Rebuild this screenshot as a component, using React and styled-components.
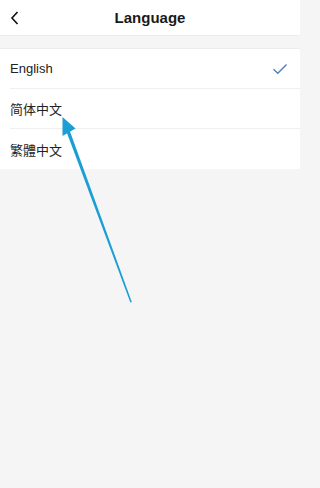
import React from "react";
import styled, { createGlobalStyle } from "styled-components";

const GlobalStyle = createGlobalStyle`
  html, body {
    margin: 0;
    padding: 0;
    background: #f5f5f5;
  }
  body {
    font-family: "Liberation Sans", Arial, "Noto Sans CJK SC", sans-serif;
  }
`;

const Page = styled.div`
  position: relative;
  width: 300px;
  min-height: 488px;
  background: #f5f5f5;
  overflow: hidden;
`;

const Header = styled.div`
  height: 36px;
  display: flex;
  align-items: center;
  justify-content: center;
  position: relative;
  background: #fff;
  border-bottom: 1px solid #ececec;
  box-sizing: border-box;
`;

const BackButton = styled.button`
  position: absolute;
  left: 6px;
  top: 8px;
  width: 18px;
  height: 20px;
  padding: 0;
  border: 0;
  background: none;
  display: flex;
  align-items: center;
  justify-content: center;
`;

const Title = styled.h1`
  margin: 0;
  font-size: 15px;
  font-weight: 700;
  color: #1a1a1a;
`;

const List = styled.ul`
  list-style: none;
  margin: 12px 0 0;
  padding: 0 0 0 10px;
  background: #fff;
  border-top: 1px solid #ececec;
`;

const Row = styled.li`
  height: 40px;
  display: flex;
  align-items: center;
  justify-content: space-between;
  padding-right: 12px;
  font-size: 13px;
  color: #222;
  border-bottom: ${(p) => (p.$last ? "none" : "1px solid #efefef")};
  box-sizing: border-box;
  font-family: "Liberation Sans", Arial, ${(p) => p.$cjk}, sans-serif;
`;

const Arrow = styled.svg`
  position: absolute;
  left: 0;
  top: 0;
  pointer-events: none;
`;

const Check = () => (
  <svg width="16" height="12" viewBox="0 0 16 12">
    <path d="M1.5 6.2 L5.8 10.2 L14.5 1.5" fill="none" stroke="#4d7fb8" strokeWidth="1.4" />
  </svg>
);

const languages = [
  { name: "English", selected: true, cjk: "'Noto Sans CJK SC'" },
  { name: "简体中文", cjk: "'Noto Sans CJK SC'" },
  { name: "繁體中文", cjk: "'Noto Sans CJK TC'" },
];

export default function App() {
  return (
    <Page>
      <GlobalStyle />
      <Header>
        <BackButton aria-label="back">
          <svg width="10" height="14" viewBox="0 0 10 14">
            <path d="M7.5 1 L2 7 L7.5 13" fill="none" stroke="#111" strokeWidth="1.6" />
          </svg>
        </BackButton>
        <Title>Language</Title>
      </Header>
      <List>
        {languages.map((l, i) => (
          <Row key={l.name} $cjk={l.cjk} $last={i === languages.length - 1}>
            <span>{l.name}</span>
            {l.selected && <Check />}
          </Row>
        ))}
      </List>
      <Arrow width="300" height="488" viewBox="0 0 300 488">
        <polygon points="131.8,302 130.4,302.5 66.2,131 69.4,129.8" fill="#1b9ed6" />
        <polygon points="62.5,117 75.5,128.5 62.5,136" fill="#1b9ed6" />
      </Arrow>
    </Page>
  );
}
